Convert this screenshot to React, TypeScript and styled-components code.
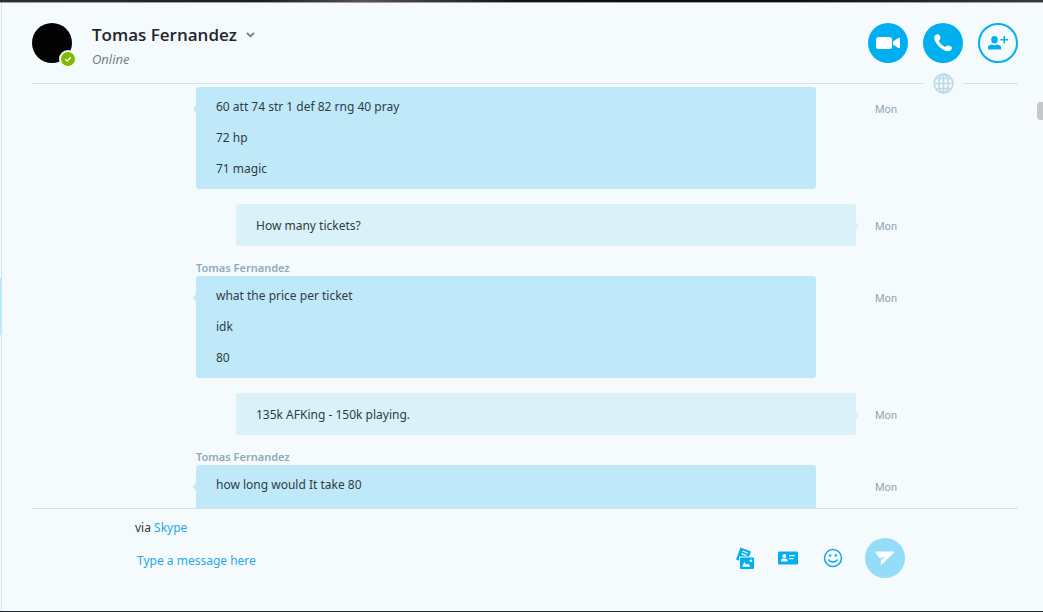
import React from "react";
import styled, { createGlobalStyle, css } from "styled-components";

const GlobalStyle = createGlobalStyle`
  *, *::before, *::after { box-sizing: border-box; }
  body {
    margin: 0;
    background: #f5fafd;
    color: #2f3c44;
    font-family: "Noto Sans", "Open Sans", sans-serif;
    font-size: 12px;
  }
  button { font: inherit; color: inherit; }
`;

const Window = styled.div`
  position: relative;
  display: flex;
  flex-direction: column;
  height: 100vh;
  overflow: hidden;
  border-bottom: 1px solid #1c262b;
`;

const TopEdge = styled.div`
  flex: none;
  height: 3px;
  border-bottom: 1px solid #a39fa3;
  background: linear-gradient(90deg, #2e2e2c, #1d1d1d 25%, #55544f 35%, #111 50%, #0c0c0a 75%, #3a3a38);
`;

const Pane = styled.div`
  flex: 1;
  min-height: 0;
  display: flex;
  flex-direction: column;
  margin-left: 1px;
  border-left: 1px solid #d5e5ec;
`;

const SelectedMark = styled.div`
  position: absolute;
  left: 0;
  top: 278px;
  width: 2px;
  height: 57px;
  background: #bfe9fa;
`;

const Header = styled.header`
  position: relative;
  flex: none;
  display: flex;
  align-items: flex-start;
  height: 81px;
  margin: 0 25px 0 30px;
  padding-top: 20px;
  border-bottom: 1px solid #d6e2e8;
`;

const Avatar = styled.div`
  position: relative;
  width: 40px;
  height: 40px;
  border-radius: 50%;
  background: #030303;
`;

const Presence = styled.svg`
  position: absolute;
  right: -5px;
  bottom: -5px;
`;

const Person = styled.div`
  flex: 1;
  min-width: 0;
  padding-left: 20px;
`;

const NameButton = styled.button`
  display: flex;
  align-items: center;
  gap: 9px;
  padding: 0;
  border: 0;
  background: none;
`;

const PersonName = styled.h1`
  margin: 0;
  font-family: "Open Sans", sans-serif;
  font-size: 17px;
  font-weight: 600;
  line-height: 24px;
  color: #24242c;
`;

const Status = styled.p`
  margin: 0;
  font-family: "Open Sans", sans-serif;
  font-size: 13px;
  font-style: italic;
  line-height: 24px;
  color: #6d7a82;
`;

const Actions = styled.div`
  display: flex;
  gap: 15px;
`;

const RoundButton = styled.button<{ $tone?: "solid" | "outline" | "soft" }>`
  display: grid;
  place-items: center;
  flex: none;
  width: 40px;
  height: 40px;
  padding: 0;
  border: 0;
  border-radius: 50%;
  background: #00aff0;
  ${(p) =>
    p.$tone === "outline" &&
    css`
      background: none;
      border: 2px solid #00aff0;
    `}
  ${(p) =>
    p.$tone === "soft" &&
    css`
      background: #94dcf8;
    `}
`;

const GlobeBadge = styled.div`
  position: absolute;
  right: 55px;
  bottom: -11px;
  display: grid;
  place-items: center;
  width: 40px;
  height: 21px;
  background: #f5fafd;
`;

const Log = styled.main`
  flex: 1;
  min-height: 0;
  overflow: hidden;
  padding: 3px 24px 0 31px;
`;

const Group = styled.section`
  display: grid;
  grid-template-columns: 1fr minmax(0, 660px) 1fr;
  margin-bottom: 15px;
`;

const Author = styled.h2`
  grid-column: 2;
  margin: 0;
  height: 15px;
  font-size: 11px;
  font-weight: 600;
  line-height: 14px;
  color: #8fabb8;
`;

const Bubble = styled.div<{ $mine?: boolean }>`
  position: relative;
  grid-column: 2;
  margin-right: 40px;
  min-height: 102px;
  padding: 4px 20px 5px;
  border-radius: 3px;
  background: #bfe9f9;

  &::before {
    content: "";
    position: absolute;
    top: 18px;
    left: -3px;
    border: solid transparent;
    border-width: 4px 3px 4px 0;
    border-right-color: #bfe9f9;
  }

  ${(p) =>
    p.$mine &&
    css`
      margin: 0 0 0 40px;
      min-height: 0;
      padding: 6px 20px 5px;
      background: #daf1fa;

      &::before {
        left: auto;
        right: -3px;
        border-width: 4px 0 4px 3px;
        border-color: transparent;
        border-left-color: #daf1fa;
      }
    `}
`;

const Line = styled.p`
  margin: 0;
  line-height: 31px;
`;

const Time = styled.time`
  grid-column: 3;
  padding: 17px 0 0 19px;
  font-family: Roboto, sans-serif;
  font-size: 11px;
  line-height: 12px;
  color: #8fa8b4;
`;

const Footer = styled.footer`
  flex: none;
  display: grid;
  grid-template-columns: 1fr minmax(0, 770px) 1fr;
  height: 103px;
  margin: 0 25px 0 30px;
  padding: 9px 10px 0 0;
  border-top: 1px solid #d0e4ec;
`;

const Composer = styled.form`
  grid-column: 2;
`;

const Via = styled.p`
  margin: 0;
  line-height: 20px;
`;

const ViaLink = styled.a`
  color: #1fa9e8;
  text-decoration: none;
`;

const ComposerRow = styled.div`
  display: flex;
  align-items: center;
`;

const MessageInput = styled.input`
  flex: 1;
  min-width: 0;
  height: 24px;
  margin-top: 5px;
  padding: 0 2px;
  border: 0;
  outline: 0;
  background: none;
  font: inherit;
  &::placeholder {
    color: #1fa9e8;
    opacity: 1;
  }
`;

const Tools = styled.div`
  display: flex;
  align-items: center;
  gap: 20px;
  margin-right: 20px;
`;

const ToolButton = styled.button`
  display: grid;
  place-items: center;
  width: 24px;
  height: 24px;
  padding: 0;
  border: 0;
  background: none;
`;

const ScrollThumb = styled.div`
  position: absolute;
  right: 0;
  top: 102px;
  width: 6px;
  height: 18px;
  border-radius: 4px 0 0 4px;
  background: #c4c8ca;
`;

type Message = { mine?: boolean; lines: string[]; named?: boolean };

const contact = "Tomas Fernandez";

const messages: Message[] = [
  { lines: ["60 att 74 str 1 def 82 rng 40 pray", "72 hp", "71 magic"] },
  { mine: true, lines: ["How many tickets?"] },
  { named: true, lines: ["what the price per ticket", "idk", "80"] },
  { mine: true, lines: ["135k AFKing - 150k playing."] },
  { named: true, lines: ["how long would It take 80"] },
];

const OnlineBadge = () => (
  <Presence width="18" height="18" viewBox="0 0 18 18">
    <circle cx="9" cy="9" r="9" fill="#f5fafd" />
    <circle cx="9" cy="9" r="7" fill="#7fba00" />
    <path d="M6.2 9.2 8.2 11 11.8 7.2" fill="none" stroke="#fff" strokeWidth="1.5" />
  </Presence>
);

const VideoIcon = () => (
  <svg width="24" height="14" viewBox="0 0 24 14" fill="#fff">
    <rect x="0" y="1" width="16" height="12" rx="2.5" />
    <path d="M17 5.5 22.3 2H24v10h-1.700L17 8.500z" />
  </svg>
);

const PhoneIcon = () => (
  <svg width="20" height="20" viewBox="0 0 20 20" fill="#fff">
    <path d="M2.200 2.300C3.400.9 5.600.8 6.500 2.200 7.300 3.500 7.500 4.700 7.300 5.700 7.100 6.500 6 6.900 6 7.700c0 1.800 4.300 6 6.200 6.100.9 0 1.200-1.100 2.100-1.300 1.200-.2 2.700.3 3.900 1.100 1.200.8.800 2.600-.5 3.700-1.600 1.300-4.200 1.100-7-.4C6.700 14.800 3.300 11.100 1.900 7.700 1 5.500 1.100 3.600 2.200 2.300z" />
  </svg>
);

const AddPersonIcon = () => (
  <svg width="22" height="16" viewBox="0 0 22 16" fill="#00aff0">
    <ellipse cx="7.500" cy="4.700" rx="3.300" ry="3.800" />
    <path d="M1 14.500v-2.200C1 10.800 2.400 10 4.800 9.500c1.600 1.100 3.700 1.100 5.400 0 2.400.5 3.800 1.300 3.800 2.800v2.200z" />
    <path d="M16.500 1H18v3h3v1.500h-3v3h-1.500v-3h-3V4h3z" />
  </svg>
);

const GlobeIcon = () => (
  <svg width="21" height="21" viewBox="0 0 21 21" fill="none" stroke="#bddbe6" strokeWidth="1.700">
    <circle cx="10.500" cy="10.500" r="9.400" />
    <ellipse cx="10.500" cy="10.500" rx="4.700" ry="9.400" />
    <path d="M10.500 1v19M1 10.500h19M2.500 5.500h16M2.500 15.500h16" />
  </svg>
);

const FilesIcon = () => (
  <svg width="20" height="24" viewBox="0 0 20 24">
    <path d="M5.500 1.500 16 5.500 14 10.500H4V14.800L1 13.500z" fill="#00aff0" />
    <path d="M7.500 5 12.800 7.100M6.500 7.600 11.500 9.600" stroke="#f5fafd" strokeWidth="1.300" />
    <rect x="5" y="11.500" width="14" height="11.500" rx="1" fill="#00aff0" />
    <path d="M7 20.800 9.300 16 11.500 18.800 13 17.500 15.500 20.800z" fill="#f5fafd" />
    <circle cx="16" cy="14.800" r="1.300" fill="#f5fafd" />
  </svg>
);

const CardIcon = () => (
  <svg width="22" height="14" viewBox="0 0 22 14">
    <rect y="0.500" width="20" height="13" rx="1.200" fill="#00aff0" />
    <g fill="#f5fafd">
      <circle cx="6.300" cy="5" r="2" />
      <path d="M3 10.500V9.200C3 8.200 4.200 7.800 5.200 7.500h2.200c1 .3 2.200.7 2.200 1.700v1.300z" />
      <path d="M11 4h6v1.200h-6zM11 7h4.500v1.200H11z" />
    </g>
  </svg>
);

const SmileIcon = () => (
  <svg width="20" height="20" viewBox="0 0 20 20" fill="none" stroke="#12a5ea" strokeWidth="1.500">
    <circle cx="10" cy="10" r="8.500" />
    <path d="M5.500 11.500c1.800 3.400 7.200 3.400 9 0" />
    <circle cx="7.200" cy="7.500" r="1.200" fill="#12a5ea" stroke="none" />
    <circle cx="12.800" cy="7.500" r="1.200" fill="#12a5ea" stroke="none" />
  </svg>
);

const SendIcon = () => (
  <svg width="20" height="14" viewBox="0 0 20 14" fill="#fff">
    <path d="M.8.500H18.600c.7 0 .9.600.4 1.100L6.800 13.500c-.5.500-1 .2-1-.4V9L10.800 5.500 4.800 7.300C3 5.500 1.500 3.500.4 1.300.2.800.3.500.8.500z" />
  </svg>
);

export default function App() {
  return (
    <>
      <GlobalStyle />
      <Window>
        <TopEdge />
        <Pane>
          <Header>
            <Avatar>
              <OnlineBadge />
            </Avatar>
            <Person>
              <NameButton type="button">
                <PersonName>{contact}</PersonName>
                <svg width="9" height="6" viewBox="0 0 9 6" fill="none" stroke="#6b7f8b" strokeWidth="1.800">
                  <path d="M1 1 4.500 4.300 8 1" />
                </svg>
              </NameButton>
              <Status>Online</Status>
            </Person>
            <Actions>
              <RoundButton type="button" aria-label="Video call">
                <VideoIcon />
              </RoundButton>
              <RoundButton type="button" aria-label="Call">
                <PhoneIcon />
              </RoundButton>
              <RoundButton type="button" $tone="outline" aria-label="Add people">
                <AddPersonIcon />
              </RoundButton>
            </Actions>
            <GlobeBadge>
              <GlobeIcon />
            </GlobeBadge>
          </Header>

          <Log>
            {messages.map((m, i) => (
              <Group key={i}>
                {m.named && <Author>{contact}</Author>}
                <Bubble $mine={m.mine}>
                  {m.lines.map((line) => (
                    <Line key={line}>{line}</Line>
                  ))}
                </Bubble>
                <Time>Mon</Time>
              </Group>
            ))}
          </Log>

          <Footer>
            <Composer onSubmit={(e) => e.preventDefault()}>
              <Via>
                via <ViaLink href="#skype">Skype</ViaLink>
              </Via>
              <ComposerRow>
                <MessageInput aria-label="Message" placeholder="Type a message here" />
                <Tools>
                  <ToolButton type="button" aria-label="Send files">
                    <FilesIcon />
                  </ToolButton>
                  <ToolButton type="button" aria-label="Send contact">
                    <CardIcon />
                  </ToolButton>
                  <ToolButton type="button" aria-label="Emoticons">
                    <SmileIcon />
                  </ToolButton>
                </Tools>
                <RoundButton $tone="soft" aria-label="Send">
                  <SendIcon />
                </RoundButton>
              </ComposerRow>
            </Composer>
          </Footer>
        </Pane>
        <SelectedMark />
        <ScrollThumb />
      </Window>
    </>
  );
}
